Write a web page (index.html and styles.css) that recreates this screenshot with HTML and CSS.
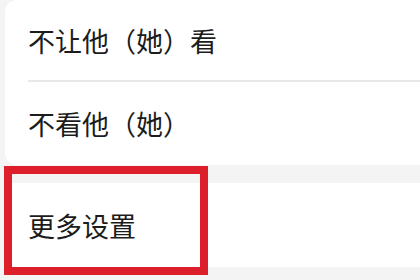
FILE: index.html
```html
<!DOCTYPE html>
<html>
  <head>
    <meta charset='UTF-8'>
    <title>设置</title>
    <link rel="stylesheet" href="styles.css">
  </head>
  <body>
    <div class='page'>
      <div class='card'>
        <div class='card__row'>不让他（她）看</div>
        <div class='card__line'></div>
        <div class='card__row'>不看他（她）</div>
      </div>
      <div class='card card--more'>
        <div class='card__row'>更多设置</div>
        <div class='mark'></div>
      </div>
    </div>
  </body>
</html>
```

FILE: styles.css
```css
html, body {
  margin: 0;
  background-color: #f4f4f4;
  font-family: 'Noto Sans CJK SC', 'Noto Sans', sans-serif;
}

.page {
  width: 420px;
  height: 280px;
  overflow: hidden;
}

.card {
  position: relative;
  margin-left: 5px;
  margin-right: -20px;
  background-color: #fff;
  border-radius: 12px;
}

.card--more {
  margin-top: 18px;
  border-radius: 0;
}

.card__row {
  display: flex;
  align-items: center;
  height: 80px;
  padding-left: 23px;
  font-size: 27px;
  color: #1c1c1c;
}

.card__row:last-child {
  height: 83px;
}

.card__line {
  height: 2px;
  margin-left: 23px;
  background-color: #e8e8e8;
}

.card--more .card__row {
  height: 84px;
}

.mark {
  position: absolute;
  top: -17px;
  left: -1px;
  width: 188px;
  height: 93px;
  border: 8px solid #dc1f2a;
}
```
